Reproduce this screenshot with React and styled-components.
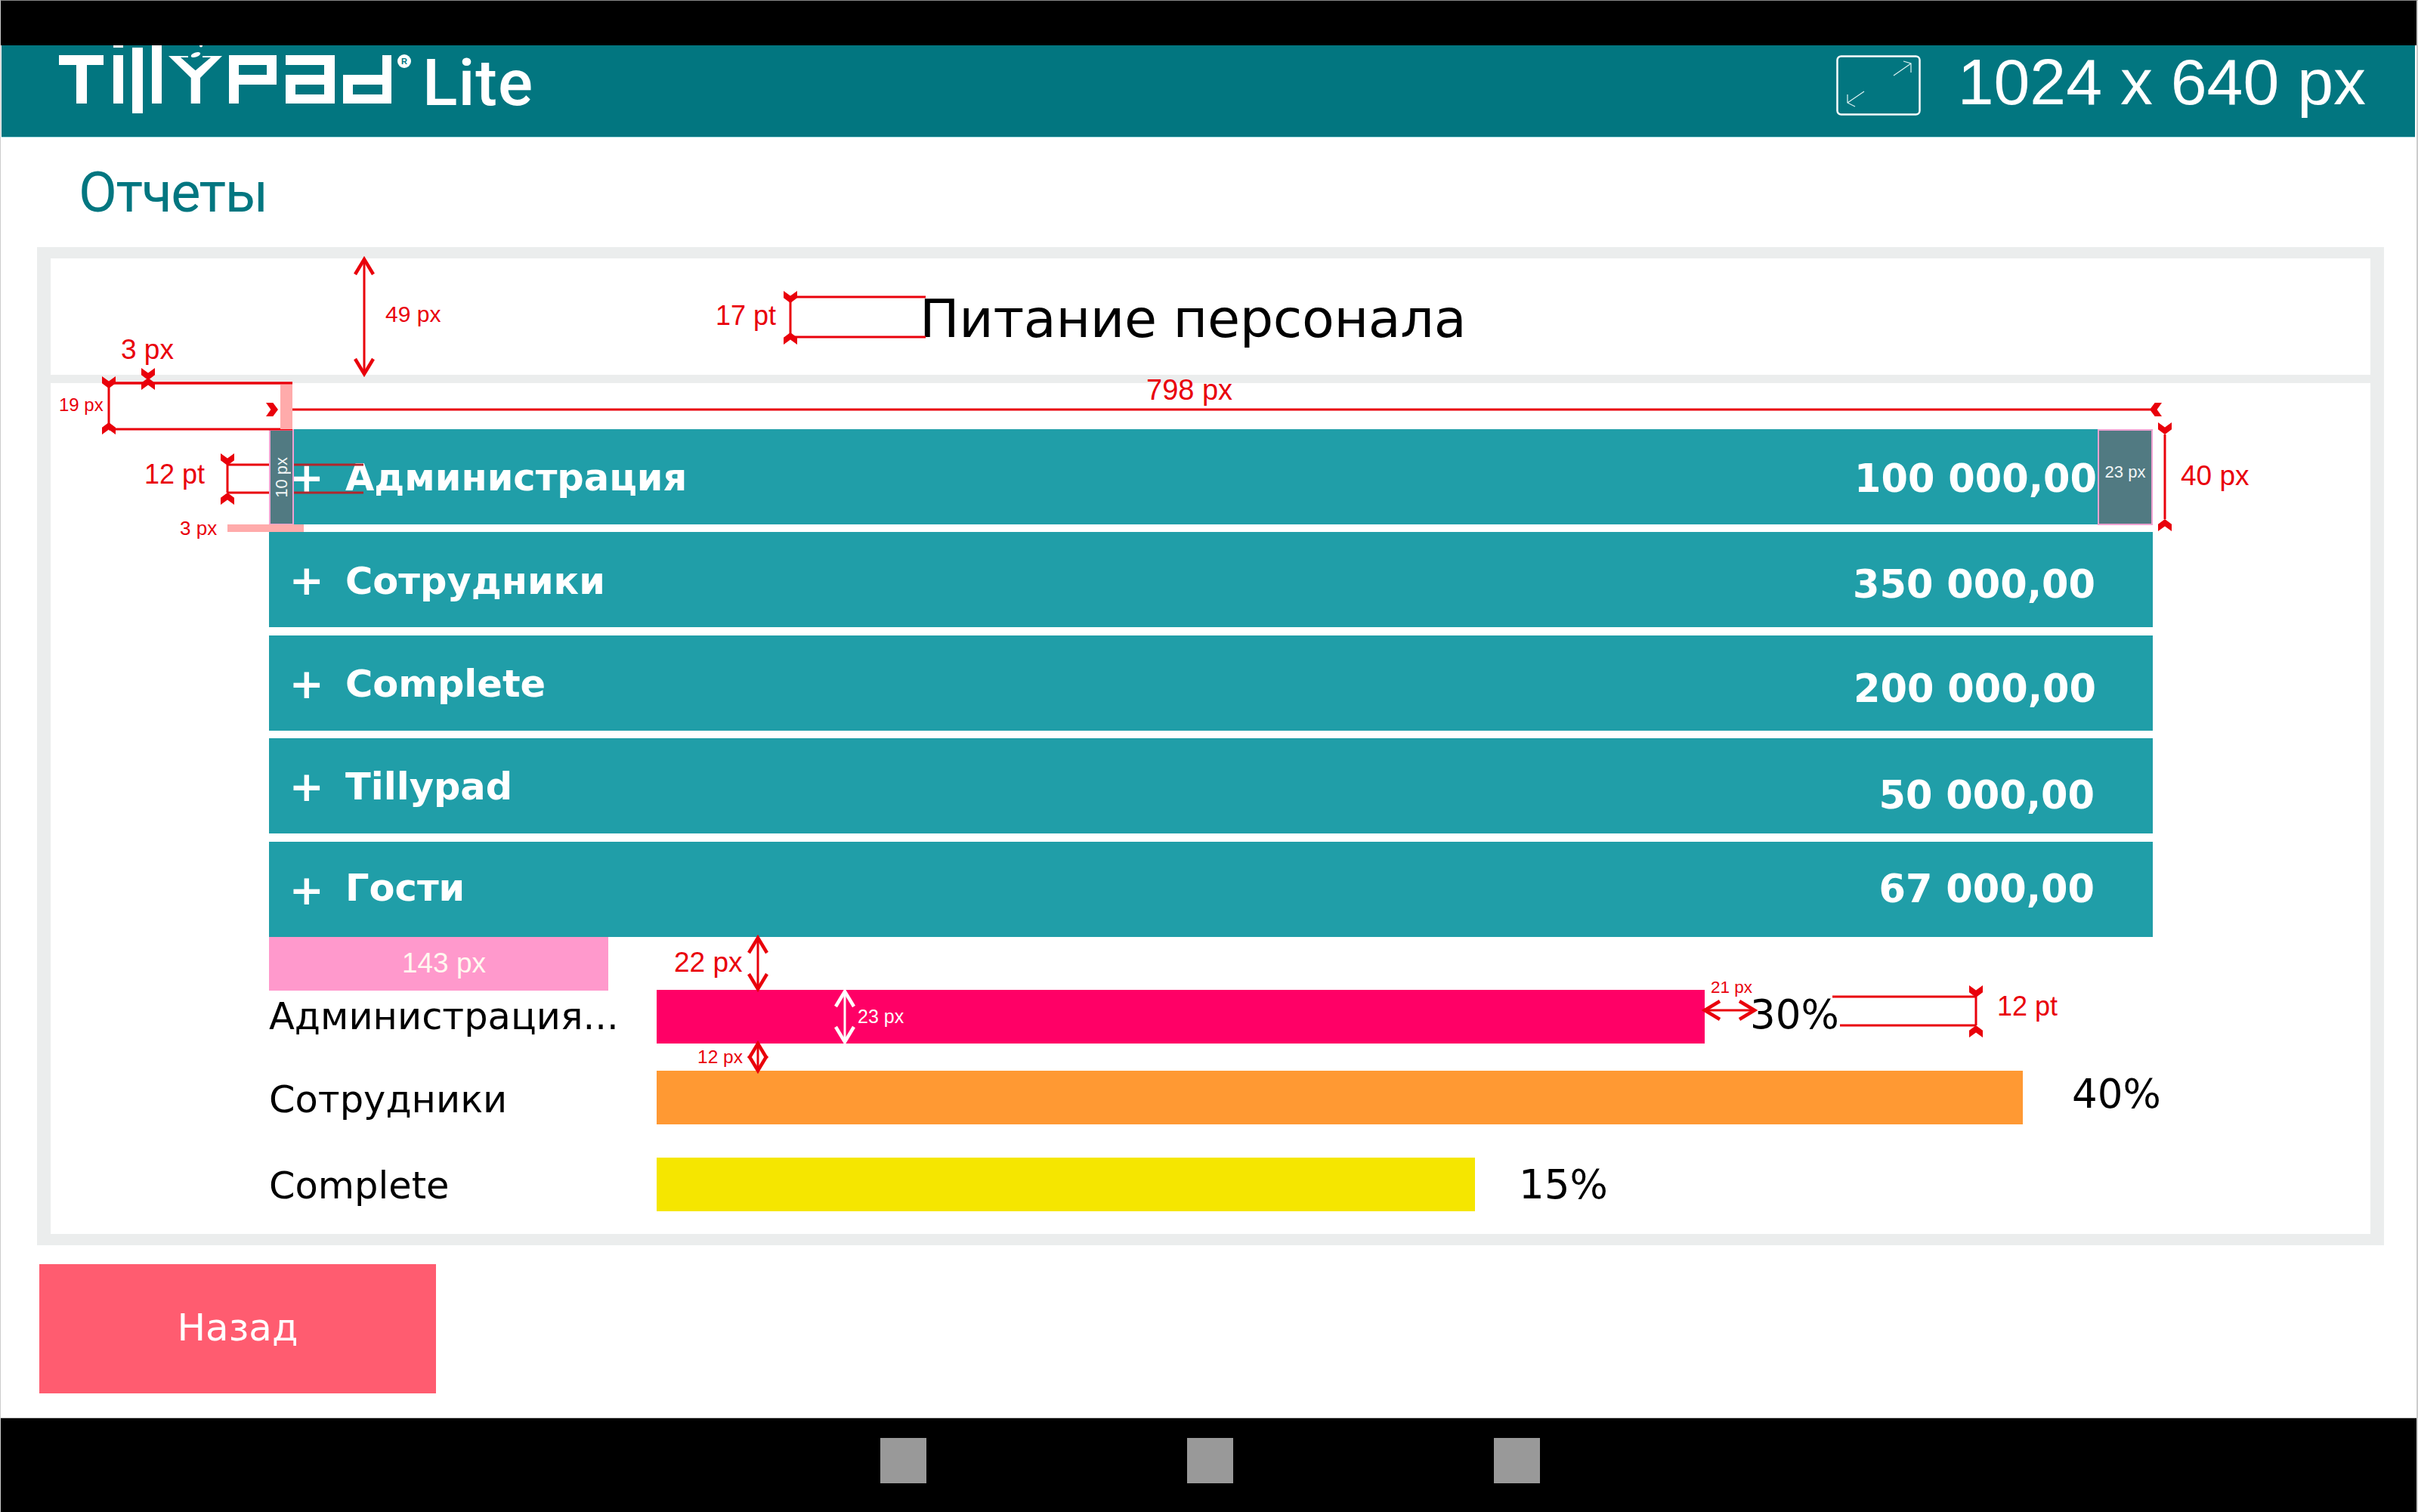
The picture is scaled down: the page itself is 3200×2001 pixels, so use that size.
import styled, { createGlobalStyle } from "styled-components";

const GlobalStyle = createGlobalStyle`
    * { box-sizing: border-box; }
    html, body { margin: 0; padding: 0; background: #fff; }
    body { font-family: "DejaVu Sans", sans-serif; }
`

const RED = "#e9000b";

const Page = styled.div`
    position: relative;
    width: 3200px;
    height: 2001px;
    display: flex;
    flex-direction: column;
    background: #fff;
    border-top: 1px solid #888;
    border-left: 1px solid #ccc;
    border-right: 2px solid #ccc;
    overflow: hidden;
`
const TopBar = styled.div`
    height: 59px;
    flex: none;
    background: #000;
`
const Header = styled.header`
    height: 122px;
    flex: none;
    margin: 0 2px 0 1px;
    display: flex;
    align-items: center;
    justify-content: space-between;
    padding: 0 65px 16px 0;
    background: #027680;
    border-bottom: 1px solid #a9dde2;
    color: #fff;
`
const Brand = styled.div`
    display: flex;
    align-items: flex-start;
    align-self: flex-start;
    height: 122px;
`
const BrandLite = styled.span`
    font-family: Roboto, sans-serif;
    font-weight: 500;
    font-size: 86px;
    letter-spacing: 1px;
    line-height: 100px;
    margin-left: 11px;
`
const Resolution = styled.div`
    display: flex;
    align-items: center;
    gap: 49px;
    font-family: "Liberation Sans", sans-serif;
    font-size: 86px;
    line-height: 1;
    & > span { transform: translateY(-5px); }
`
const ScreenTitle = styled.div`
    height: 145px;
    flex: none;
    display: flex;
    align-items: center;
    padding-left: 103px;
    font-family: Roboto, sans-serif;
    font-size: 74px;
    letter-spacing: -1.5px;
    color: #027680;
`
const Frame = styled.section`
    width: 3106px;
    height: 1321px;
    flex: none;
    margin-left: 48px;
    padding: 15px 18px;
    display: flex;
    flex-direction: column;
    gap: 11px;
    background: #ebeded;
`
const ReportTitle = styled.h1`
    height: 154px;
    flex: none;
    margin: 0;
    padding: 6px 0 0 1150px;
    display: flex;
    align-items: center;
    background: #fff;
    font-size: 70px;
    font-weight: 400;
    letter-spacing: -0.35px;
    line-height: 1;
    color: #000;
`
const Content = styled.div`
    flex: 1;
    padding: 61px 0 0 289px;
    background: #fff;
`
const Groups = styled.div`
    width: 2493px;
    display: flex;
    flex-direction: column;
    gap: 10.4px;
`
const Group = styled.div`
    position: relative;
    height: 126px;
    display: flex;
    align-items: center;
    padding: 0 74px 0 28px;
    background: #209ea8;
    color: #fff;
`
const Plus = styled.span`
    width: 73px;
    flex: none;
    font-size: 52px;
    font-weight: 400;
    -webkit-text-stroke: 2px #fff;
    transform: translateY(1px);
`
const GroupName = styled.span`
    font-size: 49.5px;
    font-weight: 700;
    line-height: 1;
    transform: translateY(${p => p.$shift}px);
`
const GroupSum = styled.span`
    margin-left: auto;
    font-size: 51px;
    font-weight: 700;
    line-height: 1;
    transform: translate(${p => p.$dx}px, ${p => p.$dy}px);
`
const MeasureCell = styled.div`
    position: absolute;
    top: 0;
    bottom: -1px;
    ${p => p.$side}: 0;
    width: ${p => p.$width}px;
    display: flex;
    align-items: center;
    justify-content: center;
    background: #517a82;
    border: 2px solid #eea1d1;
    font-family: "Liberation Sans", sans-serif;
    font-size: 22px;
    color: #f2f6f6;
    padding-bottom: ${p => p.$lift}px;
    ${p => p.$vertical && "writing-mode: vertical-rl;"}
    & > span { ${p => p.$vertical && "transform: rotate(180deg);"} }
`
const SizeTag = styled.div`
    width: 449px;
    height: 71px;
    margin-bottom: -1px;
    padding-left: 14px;
    display: flex;
    align-items: center;
    justify-content: center;
    background: #ff99cc;
    font-family: "Liberation Sans", sans-serif;
    font-size: 37px;
    color: #fff8f0;
`
const ChartRow = styled.div`
    height: 71px;
    margin-top: ${p => p.$gap}px;
    display: flex;
    align-items: flex-start;
    font-size: 49.5px;
    line-height: 71px;
    color: #000;
`
const ChartLabel = styled.span`
    width: 513px;
    flex: none;
    margin-top: ${p => p.$shift}px;
`
const Bar = styled.div`
    width: ${p => p.$width}px;
    height: 71px;
    flex: none;
    background: ${p => p.$color};
`
const Percent = styled.span`
    margin-left: ${p => p.$gap}px;
    margin-top: ${p => p.$shift}px;
    font-size: 53px;
`
const BackButton = styled.button`
    width: 525px;
    height: 171px;
    flex: none;
    margin: 25px 0 0 51px;
    padding: 0 0 3px;
    border: 0;
    background: #ff5c70;
    font-family: "DejaVu Sans", sans-serif;
    font-size: 50px;
    color: #fff;
`
const NavBar = styled.footer`
    margin-top: auto;
    height: 125px;
    flex: none;
    display: flex;
    align-items: flex-start;
    justify-content: center;
    gap: 345px;
    padding: 26px 0 0 4px;
    background: #000;
    border-top: 1px solid #bbb;
`
const NavKey = styled.div`
    width: 61px;
    height: 60px;
    background: #999;
`
const Overlay = styled.svg`
    position: absolute;
    left: -1px;
    top: -1px;
    width: 3200px;
    height: 2001px;
    pointer-events: none;
`
const Note = styled.span`
    position: absolute;
    left: ${p => p.$x - 1}px;
    top: ${p => p.$y - 1}px;
    transform: translateY(-50%);
    font-family: "Liberation Sans", sans-serif;
    font-size: ${p => p.$size}px;
    line-height: 1;
    white-space: nowrap;
    color: ${p => p.$color || RED};
`

const Logo = () => (
    <svg width="546" height="122" viewBox="0 60 546 122" aria-label="Tillypad" role="img">
        <g fill="#fff" fillRule="evenodd" transform="translate(-1 0)">
            <path d="M77 73H136V86H114V137H100V86H77Z" />
            <rect x="149" y="60" width="13" height="3" />
            <rect x="149" y="73" width="13" height="64" />
            <rect x="174" y="63" width="14" height="87" />
            <rect x="200" y="60" width="13" height="77" />
            <path d="M222 74H248V76H238L257.7 93.3L278 76H267V74H293L264 103V137H251.7V103Z" />
            <ellipse cx="258" cy="72.5" rx="6.5" ry="3" transform="rotate(-20 258 72.5)" />
            <circle cx="265" cy="60.5" r="2" />
            <path d="M302 73H365V112H315V137H302ZM315 86V99H352V86Z" />
            <path d="M377 73H442V137H377V99H428V86H377ZM390 112V125H428V112Z" />
            <path d="M505 73H517V137H453V99H505ZM466 112V125H505V112Z" />
            <circle cx="534" cy="81" r="9" />
        </g>
        <text x="533" y="85" fontFamily="Liberation Sans" fontSize="11" fontWeight="700" fill="#027680" textAnchor="middle">R</text>
    </svg>
)

const ResizeIcon = () => (
    <svg width="112" height="80" viewBox="0 0 112 80" fill="none" stroke="#dff3f3">
        <rect x="1.5" y="1.5" width="109" height="77" rx="5" strokeWidth="2.5" stroke="#fff" />
        <path d="M76 27L99 11M89 8L99 11L99 23" strokeWidth="1.2" />
        <path d="M37 48L15 63M15 52L15 63L25 68" strokeWidth="1.2" />
    </svg>
)

// filled notch head of a dimension line, (x, y) is its tip
const Head = ({ x, y, dir, w = 18, h = 16 }) => {
    const pts = [[-w / 2, -h], [0, -h * 0.6], [w / 2, -h], [w / 2, -h * 0.42], [0, 0], [-w / 2, -h * 0.42]]
    const angle = { down: 0, up: 180, right: -90, left: 90 }[dir]
    return <polygon points={pts.map(p => p.join(",")).join(" ")} fill={RED} transform={`translate(${x} ${y}) rotate(${angle})`} />
}

// open two-way arrow
const Span = ({ x1, y1, x2, y2, color = RED }) => {
    const horizontal = y1 === y2
    const heads = horizontal
        ? `M${x1 + 20} ${y1 - 12}L${x1} ${y1}L${x1 + 20} ${y1 + 12}M${x2 - 20} ${y2 - 12}L${x2} ${y2}L${x2 - 20} ${y2 + 12}`
        : `M${x1 - 12} ${y1 + 20}L${x1} ${y1}L${x1 + 12} ${y1 + 20}M${x2 - 12} ${y2 - 20}L${x2} ${y2}L${x2 + 12} ${y2 - 20}`
    return (
        <g fill="none" stroke={color}>
            <path d={`M${x1} ${y1}L${x2} ${y2}`} strokeWidth="3" />
            <path d={heads} strokeWidth="4.5" />
        </g>
    )
}

const groups = [
    { name: "Администрация", sum: "100 000,00", nameShift: 2, dx: 0, dy: 2, cell: true },
    { name: "Сотрудники", sum: "350 000,00", nameShift: 2, dx: -2, dy: 6 },
    { name: "Complete", sum: "200 000,00", nameShift: 2, dx: -1, dy: 8 },
    { name: "Tillypad", sum: "50 000,00", nameShift: 2, dx: -3, dy: 12 },
    { name: "Гости", sum: "67 000,00", nameShift: -1, dx: -3, dy: 0 },
]

const bars = [
    { label: "Администрация...", width: 1387, color: "#ff0066", value: "30%", gap: 60, labelShift: 0, valueShift: -3, rowGap: 0 },
    { label: "Сотрудники", width: 1808, color: "#ff9933", value: "40%", gap: 65, labelShift: 3, valueShift: -5, rowGap: 36 },
    { label: "Complete", width: 1083, color: "#f5e600", value: "15%", gap: 58, labelShift: 2, valueShift: 0, rowGap: 44 },
]

const notes = [
    { x: 510, y: 416, size: 30, text: "49 px" },
    { x: 160, y: 462, size: 37, text: "3 px" },
    { x: 78, y: 536, size: 24, text: "19 px" },
    { x: 947, y: 418, size: 36, text: "17 pt" },
    { x: 1517, y: 516, size: 38, text: "798 px" },
    { x: 191, y: 628, size: 36, text: "12 pt" },
    { x: 238, y: 699, size: 26, text: "3 px" },
    { x: 2886, y: 629, size: 37, text: "40 px" },
    { x: 892, y: 1273, size: 37, text: "22 px" },
    { x: 1135, y: 1345, size: 25, text: "23 px", color: "#fff" },
    { x: 923, y: 1399, size: 24.5, text: "12 px" },
    { x: 2264, y: 1307, size: 22.5, text: "21 px" },
    { x: 2643, y: 1332, size: 36, text: "12 pt" },
]

const App = () => {
    return (
        <Page>
            <GlobalStyle />
            <TopBar />
            <Header>
                <Brand>
                    <Logo />
                    <BrandLite>Lite</BrandLite>
                </Brand>
                <Resolution>
                    <ResizeIcon />
                    <span>1024 x 640 px</span>
                </Resolution>
            </Header>
            <ScreenTitle>Отчеты</ScreenTitle>
            <Frame>
                <ReportTitle>Питание персонала</ReportTitle>
                <Content>
                    <Groups>
                        {groups.map(g => (
                            <Group key={g.name}>
                                <Plus>+</Plus>
                                <GroupName $shift={g.nameShift}>{g.name}</GroupName>
                                <GroupSum $dx={g.dx} $dy={g.dy}>{g.sum}</GroupSum>
                                {g.cell && <MeasureCell $side="left" $width={33} $vertical $lift={0}><span>10 px</span></MeasureCell>}
                                {g.cell && <MeasureCell $side="right" $width={73} $lift={14}><span>23 px</span></MeasureCell>}
                            </Group>
                        ))}
                    </Groups>
                    <SizeTag>143 px</SizeTag>
                    {bars.map(b => (
                        <ChartRow key={b.label} $gap={b.rowGap}>
                            <ChartLabel $shift={b.labelShift}>{b.label}</ChartLabel>
                            <Bar $width={b.width} $color={b.color} />
                            <Percent $gap={b.gap} $shift={b.valueShift}>{b.value}</Percent>
                        </ChartRow>
                    ))}
                </Content>
            </Frame>
            <BackButton>Назад</BackButton>
            <NavBar>
                <NavKey />
                <NavKey />
                <NavKey />
            </NavBar>

            <Overlay viewBox="0 0 3200 2001">
                <g stroke={RED} strokeWidth="3" fill="none">
                    <path d="M144 507H387M144 568H387M144 507V568" />
                    <path d="M387 542H2846" />
                    <path d="M1046 393H1225M1046 446H1225M1046 393V446" />
                    <path d="M301 615H356M301 652H356M301 615V652" />
                    <path d="M389 615H481M389 652H481" stroke="#b0262c" />
                    <path d="M2865 575V687" />
                    <path d="M2425 1319H2615M2435 1357H2615M2615 1319V1357" />
                </g>
                <rect x="371" y="507" width="16" height="61" fill="#ffabab" />
                <path d="M144 507H387" stroke={RED} strokeWidth="3" />
                <rect x="301" y="694" width="101" height="10" fill="#ffabab" />
                <Head x={144} y={514} dir="down" />
                <Head x={144} y={559} dir="up" />
                <Head x={196} y={503} dir="down" />
                <Head x={196} y={500} dir="up" />
                <Head x={368} y={542} dir="right" />
                <Head x={2845} y={542} dir="left" />
                <Head x={1046} y={401} dir="down" />
                <Head x={1046} y={440} dir="up" />
                <Head x={301} y={616} dir="down" />
                <Head x={301} y={652} dir="up" />
                <Head x={2865} y={575} dir="down" />
                <Head x={2865} y={687} dir="up" />
                <Head x={2615} y={1320} dir="down" />
                <Head x={2615} y={1357} dir="up" />
                <Span x1={482} y1={343} x2={482} y2={495} />
                <Span x1={1003} y1={1241} x2={1003} y2={1309} />
                <Span x1={1003} y1={1381} x2={1003} y2={1417} />
                <Span x1={1118} y1={1312} x2={1118} y2={1379} color="#fff" />
                <Span x1={2256} y1={1337} x2={2322} y2={1337} />
            </Overlay>
            {notes.map(n => (
                <Note key={`${n.x}-${n.y}`} $x={n.x} $y={n.y} $size={n.size} $color={n.color}>{n.text}</Note>
            ))}
        </Page>
    )
}

export default App;
